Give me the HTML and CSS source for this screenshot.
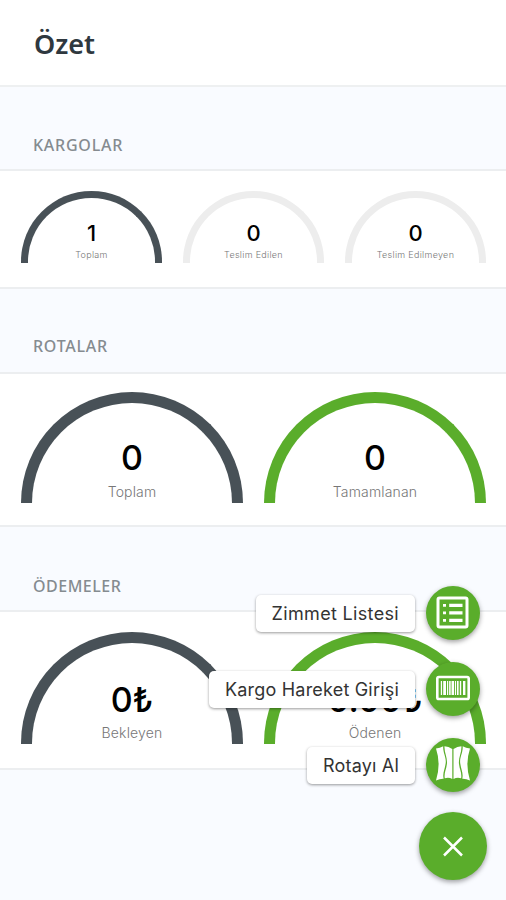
FILE: index.html
```html
<!DOCTYPE html>
<html lang="tr">
<head>
<meta charset="utf-8">
<title>Özet</title>
<link rel="stylesheet" href="styles.css">
</head>
<body>
<header class="header"><h1>Özet</h1></header>
<main>
  <section class="section cargo">
    <h2>KARGOLAR</h2>
    <div class="row small">
      <div class="gauge dark"><b>1</b><small>Toplam</small></div>
      <div class="gauge empty"><b>0</b><small>Teslim Edilen</small></div>
      <div class="gauge empty"><b>0</b><small>Teslim Edilmeyen</small></div>
    </div>
  </section>
  <section class="section routes">
    <h2>ROTALAR</h2>
    <div class="row">
      <div class="gauge dark"><b>0</b><small>Toplam</small></div>
      <div class="gauge green"><b>0</b><small>Tamamlanan</small></div>
    </div>
  </section>
  <section class="section payments">
    <h2>ÖDEMELER</h2>
    <div class="row">
      <div class="gauge dark"><b>0₺</b><small>Bekleyen</small></div>
      <div class="gauge green"><b>0.00₺</b><small>Ödenen</small></div>
    </div>
  </section>
</main>
<nav class="dial">
  <div class="action">
    <span class="label wide">Zimmet Listesi</span>
    <button class="fab" aria-label="Zimmet Listesi">
      <svg width="54" height="54" viewBox="0 0 54 54" fill="#fff">
        <rect x="12" y="12" width="29" height="29" rx="1.5" fill="none" stroke="#fff" stroke-width="3"/>
        <path d="M17 18h3v2.800h-3zM17 25.500h3v2.800h-3zM17 33h3v2.800h-3z"/>
        <path d="M23.200 17.800h13.300v3.200H23.200zM23.200 25.300h13.300v3.200H23.200zM23.200 32.800h13.300v3.200H23.200z"/>
      </svg>
    </button>
  </div>
  <div class="action">
    <span class="label">Kargo Hareket Girişi</span>
    <button class="fab" aria-label="Kargo Hareket Girişi">
      <svg width="54" height="54" viewBox="0 0 54 54" fill="#fff">
        <rect x="11.300" y="15" width="31.400" height="22" rx="1.600" fill="none" stroke="#fff" stroke-width="2.600"/>
        <path d="M14.800 19h1.300v14h-1.300zM17.200 19h2.800v14h-2.800zM21 19h1.200v14H21zM23.100 19h1.600v14h-1.600zM25.500 19h2.500v14h-2.500zM28.900 19h1.200v14h-1.200zM31 19h1.600v14H31zM33.800 19h1.400v14h-1.400zM37 19h2.400v14H37z"/>
      </svg>
    </button>
  </div>
  <div class="action">
    <span class="label">Rotayı Al</span>
    <button class="fab" aria-label="Rotayı Al">
      <svg width="54" height="54" viewBox="0 0 54 54" fill="#fff">
        <path d="M10 10.500q4-.2 7.200-2.200c-.4 7 3.500 11 2.400 17.500c-.8 6-3.200 9-2 14.900q-3.600-.2-7.600 1.800q5.200-16.500 0-32z"/>
        <path d="M18.500 8.300q4 .2 7.800 2.800v29.800q-3.500-1.700-7.500-.6c-1-5 1.400-8.400 2.100-14.300c.8-6.200-2.800-11-2.400-17.700z"/>
        <path d="M27.500 11.100q3.900-2.600 7.900-2.800c.4 6.700-3.200 11.500-2.400 17.700c.7 5.900 3.100 9.300 2.100 14.300q-4-1.100-7.600.6z"/>
        <path d="M36.700 8.300q3.200 2 7.300 2.200q-5.200 15.500 0 32q-4-2-7.700-1.800c1.200-5.900-1.200-8.900-2-14.900c-1.100-6.500 2.800-10.500 2.400-17.500z"/>
      </svg>
    </button>
  </div>
  <button class="fab main" aria-label="Kapat">
    <svg width="68" height="68" viewBox="0 0 68 68" fill="none" stroke="#fff" stroke-width="2.500">
      <path d="M25 25.500l18 18M43 25.500L25 43.500"/>
    </svg>
  </button>
</nav>
</body>
</html>
```

FILE: styles.css
```css
* { box-sizing: border-box; }
body {
  margin: 0;
  height: 900px;
  overflow: hidden;
  position: relative;
  background: #f9fbff;
  font-family: Inter, "Liberation Sans", sans-serif;
}
.header {
  height: 87px;
  background: #fff;
  border-bottom: 2px solid #eef0f1;
}
h1, h2 { margin: 0; font-family: "Noto Sans", sans-serif; }
h1 {
  padding: 25px 0 0 34px;
  font-size: 27px;
  line-height: 38px;
  font-weight: 600;
  color: #2f383f;
}
.section { display: flex; flex-direction: column; }
h2 {
  flex: 1;
  display: flex;
  align-items: flex-end;
  padding: 0 0 14px 33px;
  font-size: 16px;
  line-height: 20px;
  font-weight: 500;
  letter-spacing: .75px;
  color: #858b90;
}
.cargo { height: 202px; }
.routes { height: 238px; }
.payments { height: 243px; }
.routes h2 { padding-bottom: 16px; }
.payments h2 { letter-spacing: .5px; }
.row {
  height: 155px;
  display: flex;
  gap: 21px;
  padding: 17.5px 20px 0 21px;
  background: #fff;
  border-top: 2px solid #eceef0;
  border-bottom: 2px solid #eceef0;
}
.gauge {
  flex: 1;
  height: 111px;
  display: flex;
  flex-direction: column;
  align-items: center;
  border: 11px solid;
  border-bottom: 0;
  border-radius: 111px 111px 0 0;
}
.dark { border-color: #485157; }
.green { border-color: #5aad2b; }
.empty { border-color: #ededed; }
.gauge b {
  margin-top: 35px;
  font-size: 34px;
  line-height: 40px;
  font-weight: 450;
  color: #000;
  white-space: nowrap;
}
.gauge small {
  margin-top: 4px;
  font-size: 14px;
  line-height: 20px;
  font-weight: 300;
  letter-spacing: .15px;
  color: #777;
  white-space: nowrap;
}
.payments .row { height: 160px; padding-top: 20px; }
.payments .gauge { height: 112px; }
.payments .gauge b { margin-top: 37px; }
.payments .gauge small { margin-top: 3px; }
.row.small { height: 120px; padding-top: 19.5px; }
.small .gauge {
  height: 72px;
  border-width: 7px;
  border-bottom: 0;
  border-radius: 72px 72px 0 0;
}
.small .gauge b { margin-top: 22px; font-size: 22px; line-height: 26px; }
.small .gauge small { margin-top: 4px; font-size: 9px; line-height: 10px; letter-spacing: .3px; }
.dial {
  position: absolute;
  right: 19px;
  bottom: 20px;
  display: flex;
  flex-direction: column;
  align-items: flex-end;
}
.action {
  height: 76px;
  display: flex;
  gap: 11px;
  padding-right: 7px;
}
.action:nth-child(3) { height: 74px; }
.label {
  height: 37px;
  margin-top: 8.5px;
  padding: 0 16px;
  border-radius: 5px;
  background: #fff;
  box-shadow: 0 1px 3px rgba(0, 0, 0, .4);
  font-size: 18px;
  line-height: 37px;
  letter-spacing: .2px;
  color: #333;
  white-space: nowrap;
}
.label.wide { letter-spacing: .33px; }
.fab {
  width: 54px;
  height: 54px;
  padding: 0;
  border: 0;
  border-radius: 50%;
  background: #5aad2b;
  box-shadow: 0 2px 5px rgba(0, 0, 0, .38);
}
.fab svg { display: block; }
.main { width: 68px; height: 68px; }
```
